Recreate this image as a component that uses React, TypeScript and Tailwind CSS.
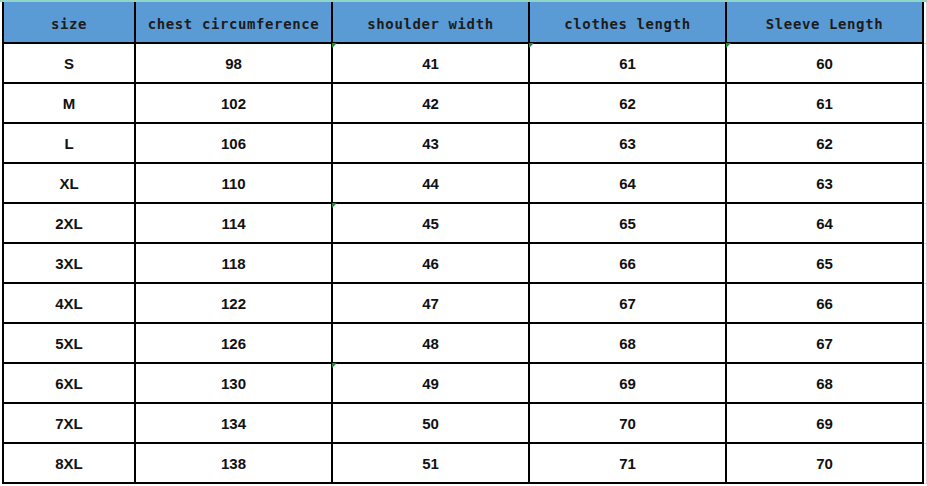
const headers = ["size", "chest circumference", "shoulder width", "clothes length", "Sleeve Length"];

const rows: [string, number, number, number, number][] = [
	["S", 98, 41, 61, 60],
	["M", 102, 42, 62, 61],
	["L", 106, 43, 63, 62],
	["XL", 110, 44, 64, 63],
	["2XL", 114, 45, 65, 64],
	["3XL", 118, 46, 66, 65],
	["4XL", 122, 47, 67, 66],
	["5XL", 126, 48, 68, 67],
	["6XL", 130, 49, 69, 68],
	["7XL", 134, 50, 70, 69],
	["8XL", 138, 51, 71, 70],
];

// cells that show the little green "number stored as text" marker
const marked = new Set(["0-2", "0-3", "0-4", "4-2", "8-2"]);

function Marker() {
	return (
		<span className="absolute -left-[1px] -top-[1px] w-0 h-0 border-t-[5px] border-r-[5px] border-t-[#1e8a2e] border-r-transparent" />
	);
}

export default function App() {
	return (
		<main className="w-[927px] h-[486px] bg-white overflow-hidden">
			<div className="h-[2px] bg-[#8fd6c6]" />
			<div className="flex pl-[2px]">
				<div className="flex flex-col">
					<div className="flex h-[42px] bg-[#5b9bd5] border-b-2 border-black">
						{headers.map((h, i) => (
							<div
								key={h}
								className={
									i === 0
										? "w-[134px] border-l-2 border-r-2 border-black flex items-center justify-center pt-[5px]"
										: "w-[197px] border-r-2 border-black flex items-center justify-center pt-[5px]"
								}
								style={{ fontFamily: '"DejaVu Sans Mono", monospace' }}
							>
								<span className="text-[14px] font-bold tracking-[0.6px] text-[#1c1c1c]">{h}</span>
							</div>
						))}
					</div>
					{rows.map((r, ri) => (
						<div key={r[0]} className="flex h-[40px] border-b-2 border-black">
							{r.map((v, ci) => (
								<div
									key={ci}
									className={
										ci === 0
											? "relative w-[134px] border-l-2 border-r-2 border-black flex items-center justify-center pt-[2px]"
											: "relative w-[197px] border-r-2 border-black flex items-center justify-center pt-[2px]"
									}
									style={{ fontFamily: '"Liberation Sans", Arial, sans-serif' }}
								>
									{marked.has(`${ri}-${ci}`) && <Marker />}
									<span className="text-[15px] font-bold text-[#111]">{v}</span>
								</div>
							))}
						</div>
					))}
				</div>
				<div className="flex flex-col w-[3px]">
					<div className="h-[42px] border-r border-b border-[#d4d4d4]" />
					{rows.map((r) => (
						<div key={r[0]} className="h-[40px] border-r border-b border-[#d4d4d4]" />
					))}
				</div>
			</div>
		</main>
	);
}
